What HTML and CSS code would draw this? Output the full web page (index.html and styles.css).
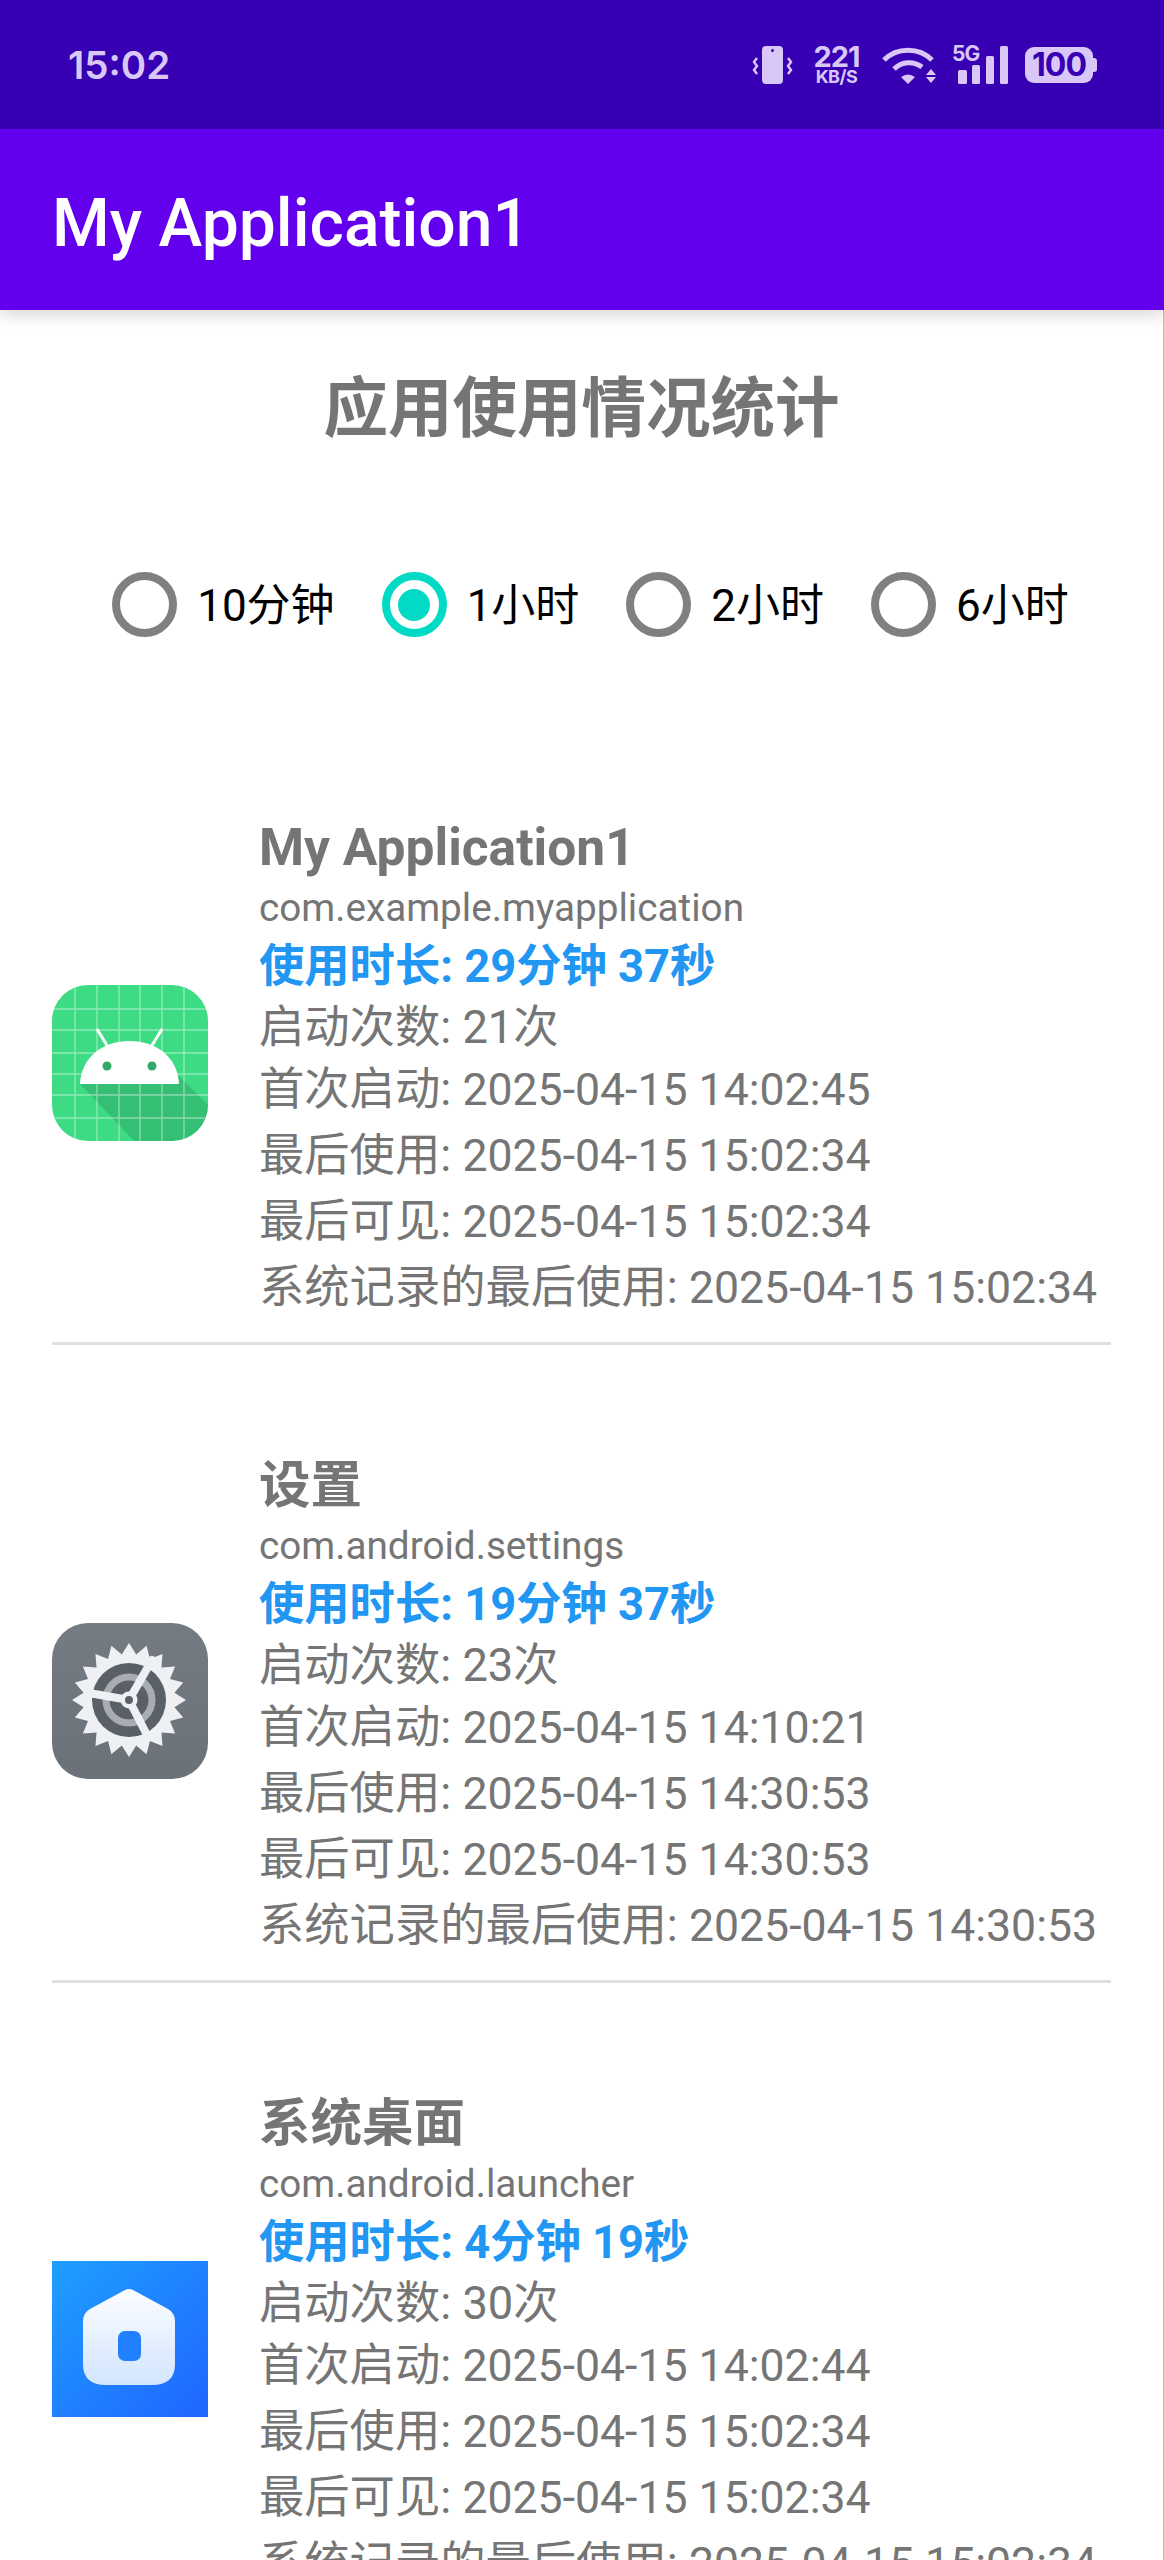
FILE: index.html
```html
<!DOCTYPE html>
<html lang="zh">
<head>
<meta charset="utf-8">
<title>My Application1</title>
<link rel="stylesheet" href="styles.css">
</head>
<body>
<div class="page">
  <header class="statusbar">
    <span class="time">15:02</span>
    <div class="status-icons">
      <svg class="ic-phone" width="42" height="38" viewBox="0 0 42 38">
        <rect x="10" y="0" width="21" height="38" rx="4" fill="#d9c8f7"/>
        <circle cx="20.5" cy="4.5" r="1.5" fill="#3700b3"/>
        <path d="M5 12 L2 16 L5 20 L2 24 L5 28" fill="none" stroke="#d9c8f7" stroke-width="2.4"/>
        <path d="M36 12 L39 16 L36 20 L39 24 L36 28" fill="none" stroke="#d9c8f7" stroke-width="2.4"/>
      </svg>
      <div class="speed"><span class="speed-num">221</span><span class="speed-unit">KB/S</span></div>
      <svg class="ic-wifi" width="54" height="38" viewBox="0 0 54 38">
        <path d="M2 14 C15 1 37 1 50 14" fill="none" stroke="#d9c8f7" stroke-width="5"/>
        <path d="M12 23 C20 15 32 15 40 21" fill="none" stroke="#d9c8f7" stroke-width="5"/>
        <path d="M19 31 Q26 26 33 31 L26 38 Z" fill="#d9c8f7"/>
        <path d="M44 29 L49 23 L54 29 Z M44 31 L54 31 L49 37 Z" fill="#d9c8f7"/>
      </svg>
      <div class="signal">
        <span class="five-g">5G</span>
        <svg width="56" height="38" viewBox="0 0 56 38">
          <rect x="6" y="24" width="9" height="14" rx="1.5" fill="#d9c8f7"/>
          <rect x="20" y="19" width="8" height="19" rx="1.5" fill="#d9c8f7"/>
          <rect x="34" y="10" width="8" height="28" rx="1.5" fill="#d9c8f7"/>
          <rect x="48" y="0" width="8" height="38" rx="1.5" fill="#d9c8f7"/>
        </svg>
      </div>
      <div class="battery">100</div>
    </div>
  </header>
  <div class="toolbar">My Application1</div>
  <main class="content">
    <h1 class="heading">应用使用情况统计</h1>
    <div class="radios">
      <div class="radio"><span class="dot"></span><span class="radio-label">10分钟</span></div>
      <div class="radio"><span class="dot dot-on"></span><span class="radio-label">1小时</span></div>
      <div class="radio"><span class="dot"></span><span class="radio-label">2小时</span></div>
      <div class="radio"><span class="dot"></span><span class="radio-label">6小时</span></div>
    </div>

    <section class="row">
      <svg class="app-icon" width="156" height="156" viewBox="0 0 156 156">
        <defs><clipPath id="squircle"><rect width="156" height="156" rx="36"/></clipPath></defs>
        <g clip-path="url(#squircle)">
          <rect width="156" height="156" fill="#3ddc84"/>
          <path d="M28 99 L127 91 L160 124 L160 160 L86 160 Z" fill="#2fa868" fill-opacity=".55"/>
          <path d="M23 0V156M45 0V156M67 0V156M88 0V156M110 0V156M132 0V156M0 24H156M0 45H156M0 68H156M0 89H156M0 110H156M0 133H156" stroke="#fff" stroke-opacity=".42" stroke-width="1.4" fill="none"/>
          <path d="M45 44 L56 62 M110 44 L99 62" stroke="#fff" stroke-width="3"/>
          <path d="M28 99 C29 73 50 56 77.500 56 C105 56 126 73 127 99 Z" fill="#fff"/>
          <circle cx="55" cy="81" r="4.500" fill="#2fa868"/>
          <circle cx="100" cy="81" r="4.500" fill="#2fa868"/>
        </g>
      </svg>
      <div class="info">
        <div class="name">My Application1</div>
        <div class="pkg">com.example.myapplication</div>
        <div class="duration">使用时长: 29分钟 37秒</div>
        <div class="count">启动次数: 21次</div>
        <div class="line">首次启动: <span class="ts">2025-04-15 14:02:45</span></div>
        <div class="line">最后使用: <span class="ts">2025-04-15 15:02:34</span></div>
        <div class="line">最后可见: <span class="ts">2025-04-15 15:02:34</span></div>
        <div class="line">系统记录的最后使用: <span class="ts">2025-04-15 15:02:34</span></div>
      </div>
    </section>

    <section class="row">
      <svg class="app-icon" width="156" height="156" viewBox="0 0 156 156">
        <defs><linearGradient id="slate" x1="0" y1="0" x2="0" y2="1"><stop offset="0" stop-color="#757b83"/><stop offset="1" stop-color="#6b7179"/></linearGradient></defs>
        <rect width="156" height="156" rx="36" fill="url(#slate)"/>
        <g transform="translate(77 77)">
          <polygon fill="#eef0f4" points="0,-57 7.2,-45.4 17.6,-54.2 20.9,-41 33.5,-46.1 32.5,-32.5 46.1,-33.5 41,-20.9 54.2,-17.6 45.4,-7.2 57,0 45.4,7.2 54.2,17.6 41,20.9 46.1,33.5 32.5,32.5 33.500,46.1 20.9,41 17.6,54.2 7.2,45.4 0,57 -7.2,45.4 -17.6,54.2 -20.9,41 -33.5,46.1 -32.5,32.5 -46.1,33.5 -41,20.9 -54.2,17.6 -45.4,7.2 -57,0 -45.4,-7.2 -54.2,-17.6 -41,-20.9 -46.1,-33.5 -32.5,-32.5 -33.5,-46.1 -20.9,-41 -17.6,-54.2 -7.2,-45.4"/>
          <circle r="37" fill="#596068"/>
          <circle r="23" fill="none" stroke="#a9adb3" stroke-width="7"/>
          <path d="M0 0 L23 -40 M0 0 L-40 -7 M0 0 L18 35" stroke="#eef0f4" stroke-width="8" stroke-linecap="round"/>
          <circle r="8.500" fill="#eef0f4"/>
          <circle r="4" fill="#596068"/>
        </g>
      </svg>
      <div class="info">
        <div class="name">设置</div>
        <div class="pkg">com.android.settings</div>
        <div class="duration">使用时长: 19分钟 37秒</div>
        <div class="count">启动次数: 23次</div>
        <div class="line">首次启动: <span class="ts">2025-04-15 14:10:21</span></div>
        <div class="line">最后使用: <span class="ts">2025-04-15 14:30:53</span></div>
        <div class="line">最后可见: <span class="ts">2025-04-15 14:30:53</span></div>
        <div class="line">系统记录的最后使用: <span class="ts">2025-04-15 14:30:53</span></div>
      </div>
    </section>

    <section class="row">
      <svg class="app-icon" width="156" height="156" viewBox="0 0 156 156">
        <defs>
          <linearGradient id="sky" x1="0" y1="0" x2="1" y2="1"><stop offset="0" stop-color="#1e9fff"/><stop offset="1" stop-color="#2065ff"/></linearGradient>
          <linearGradient id="wall" x1="0" y1="0" x2="0" y2="1"><stop offset="0" stop-color="#fbfdff"/><stop offset="1" stop-color="#d3e5ff"/></linearGradient>
        </defs>
        <rect width="156" height="156" fill="url(#sky)"/>
        <path d="M73 29 Q77 27 81 29 L116 48 Q123 52 123 60 L123 103 Q123 124 100 124 L54 124 Q31 124 31 103 L31 60 Q31 52 38 48 Z" fill="url(#wall)"/>
        <rect x="66" y="70" width="23" height="30" rx="7" fill="#2080ff"/>
      </svg>
      <div class="info">
        <div class="name">系统桌面</div>
        <div class="pkg">com.android.launcher</div>
        <div class="duration">使用时长: 4分钟 19秒</div>
        <div class="count">启动次数: 30次</div>
        <div class="line">首次启动: <span class="ts">2025-04-15 14:02:44</span></div>
        <div class="line">最后使用: <span class="ts">2025-04-15 15:02:34</span></div>
        <div class="line">最后可见: <span class="ts">2025-04-15 15:02:34</span></div>
        <div class="line">系统记录的最后使用: <span class="ts">2025-04-15 15:02:34</span></div>
      </div>
    </section>
  </main>
</div>
</body>
</html>
```
FILE: styles.css
```css
* { box-sizing: border-box; }
html, body { margin: 0; padding: 0; background: #fff; }
body { font-family: Roboto, "Noto Sans CJK SC", sans-serif; }
.page { width: 1164px; height: 2560px; overflow: hidden; display: flex; flex-direction: column; }

.statusbar { height: 129px; flex: none; background: #3700b3; display: flex; align-items: center; justify-content: space-between; padding: 0 67px 0 68px; color: #d9c8f7; }
.time { font-family: Inter, sans-serif; font-weight: 600; font-size: 38.5px; line-height: 44px; }
.status-icons { display: flex; align-items: center; gap: 20px; height: 38px; }
.speed { display: flex; flex-direction: column; align-items: center; width: 45px; font-family: Inter, sans-serif; font-weight: 700; margin-right: 3px; }
.speed-num { font-size: 29px; line-height: 24px; letter-spacing: -1px; }
.speed-unit { font-size: 18px; line-height: 15px; letter-spacing: -.5px; }
.ic-wifi { margin-right: -4px; }
.signal { position: relative; width: 56px; height: 38px; }
.signal svg { display: block; }
.five-g { position: absolute; left: 0; top: -2px; font-family: Inter, sans-serif; font-weight: 700; font-size: 21px; line-height: 20px; letter-spacing: -1px; }
.battery { position: relative; width: 68px; height: 36px; margin-left: -3px; margin-right: 4px; background: #d9c8f7; border-radius: 9px; color: #3700b3; font-family: Inter, sans-serif; font-weight: 700; font-size: 32px; line-height: 36px; text-align: center; letter-spacing: -1px; }
.battery::after { content: ""; position: absolute; right: -4px; top: 11px; width: 4px; height: 14px; background: #d9c8f7; border-radius: 0 3px 3px 0; }

.toolbar { height: 181px; flex: none; background: #6200ee; color: #fff; font-size: 66px; font-weight: 500; line-height: 173px; padding: 8px 0 0 52px; box-shadow: 0 5px 16px rgba(0,0,0,.16); position: relative; z-index: 1; }

.content { flex: 1; border-right: 1px solid #bdbdbd; padding: 69px 0 0; }
.heading { margin: 0; height: 60px; text-align: center; color: #757575; font-size: 64.5px; line-height: 60px; font-weight: 700; }
.radios { display: flex; justify-content: center; gap: 47px; margin-top: 133px; padding-left: 18px; height: 65px; }
.radio { display: flex; align-items: center; gap: 20px; }
.dot { width: 65px; height: 65px; border-radius: 50%; border: 8px solid #808080; display: flex; align-items: center; justify-content: center; flex: none; }
.dot-on { border-color: #03dac5; }
.dot-on::after { content: ""; width: 32px; height: 32px; border-radius: 50%; background: #03dac5; }
.radio-label { font-size: 44px; line-height: 60px; color: #000; padding-top: 2px; }

.row { display: flex; align-items: center; margin: 70px 52px 0; }
.row + .row { margin-top: 0; }
.row { padding: 106px 0 22px; border-bottom: 3px solid #e0e0e0; height: 638px; }
.app-icon { flex: none; margin: 0 51px 8px 0; display: block; }
.info { min-width: 0; align-self: flex-start; color: #757575; white-space: nowrap; }
.name { font-size: 51.5px; font-weight: 700; line-height: 69px; }
.pkg { font-size: 38.7px; line-height: 52px; }
.duration { font-size: 45.3px; font-weight: 700; line-height: 65px; color: #2196f3; }
.count { font-size: 45.3px; line-height: 58px; }
.line { font-size: 45.3px; line-height: 66px; }
.ts { font-size: 44.6px; }
```
